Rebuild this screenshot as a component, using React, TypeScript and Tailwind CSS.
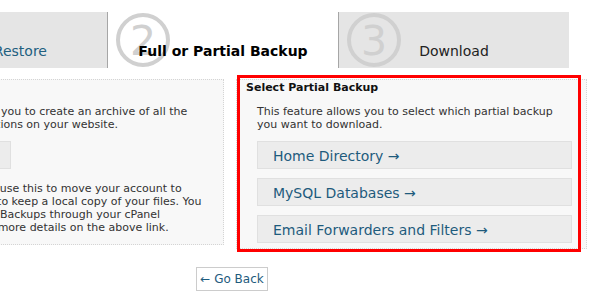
import React from 'react';

const StepCircle: React.FC<{ n: string }> = ({ n }) => (
  <svg className="absolute left-[7px] top-0 w-[56px] h-[56px]" viewBox="0 0 56 56">
    <circle cx="28" cy="28" r="25" fill="none" stroke="#d0d0d0" strokeWidth="4" />
    <text x="28" y="43" textAnchor="middle" fontSize="41" fill="#d0d0d0" fontFamily="DejaVu Sans">
      {n}
    </text>
  </svg>
);

const options = ['Home Directory', 'MySQL Databases', 'Email Forwarders and Filters'];

const App: React.FC = () => {
  return (
    <div className="w-[600px] h-[303px] overflow-hidden bg-white pt-[12px] font-['DejaVu_Sans',sans-serif] text-[#333]">
      {/* Wizard steps */}
      <div className="flex h-[56px] -ml-[147px] w-max">
        <div className="relative w-[255px] flex items-end justify-center pb-[9px] bg-[#e5e5e5] border-r border-[#a6a6a6]">
          <StepCircle n="1" />
          <span className="relative text-[14px] leading-[16px] text-[#22607f]">Back Up or Restore</span>
        </div>
        <div className="relative w-[230px] flex items-end justify-center pb-[9px] bg-white">
          <StepCircle n="2" />
          <span className="relative text-[14px] leading-[16px] font-bold text-black">Full or Partial Backup</span>
        </div>
        <div className="relative w-[231px] flex items-end justify-center pb-[9px] bg-[#e5e5e5] border-l border-[#a6a6a6]">
          <StepCircle n="3" />
          <span className="relative text-[14px] leading-[16px] text-[#222]">Download</span>
        </div>
      </div>

      {/* Panels */}
      <div className="flex items-start gap-[12px] mt-[11px] -ml-[127px] w-max text-[11px] leading-[13px]">
        <div className="w-[351px] bg-[#f8f8f8] border border-dotted border-[#d4d4d4] pb-[10px]">
          <h3 className="pt-[1px] pl-[9px] font-bold text-[#111]">Select Full Backup</h3>
          <div className="pl-[20px] pr-[14px]">
            <p className="mt-[11px]">
              This feature allows you to create an archive of all the files and configurations on your website.
            </p>
            <a href="#" className="mt-[10px] block w-[117px] h-[28px] pl-[15px] pt-[6px] text-[14px] leading-[16px] text-[#1e5b7d] bg-[#ececec] border border-[#e0e0e0] whitespace-nowrap overflow-hidden">
              Full Backup
            </a>
            <p className="mt-[13px]">
              Note: You can only use this to move your account to another server, or to keep a local copy of your files. You
              cannot restore Full Backups through your cPanel interface. Find the more details on the above link.
            </p>
          </div>
        </div>

        <div className="relative w-[351px] bg-[#f8f8f8] border border-dotted border-[#d4d4d4] pb-[5px]">
          <h3 className="pt-[1px] pl-[9px] font-bold text-[#111]">Select Partial Backup</h3>
          <div className="pl-[20px] pr-[14px]">
            <p className="mt-[11px]">This feature allows you to select which partial backup you want to download.</p>
            <div className="mt-[10px] flex flex-col gap-[9px]">
              {options.map((o) => (
                <a
                  key={o}
                  href="#"
                  className="block h-[28px] pl-[15px] pt-[6px] text-[14px] leading-[16px] text-[#1e5b7d] bg-[#ececec] border border-[#e0e0e0]"
                >
                  {o} →
                </a>
              ))}
            </div>
          </div>
          {/* highlight annotation */}
          <div className="absolute left-0 right-[5px] -top-[5px] -bottom-[4px] border-[3px] border-[#ff0000] pointer-events-none" />
        </div>
      </div>

      <a
        href="#"
        className="mt-[18px] ml-[196px] flex w-[72px] h-[24px] items-center justify-center border border-[#cccccc] text-[12px] text-[#1e5b7d] bg-white"
      >
        ← Go Back
      </a>
    </div>
  );
};

export default App;
